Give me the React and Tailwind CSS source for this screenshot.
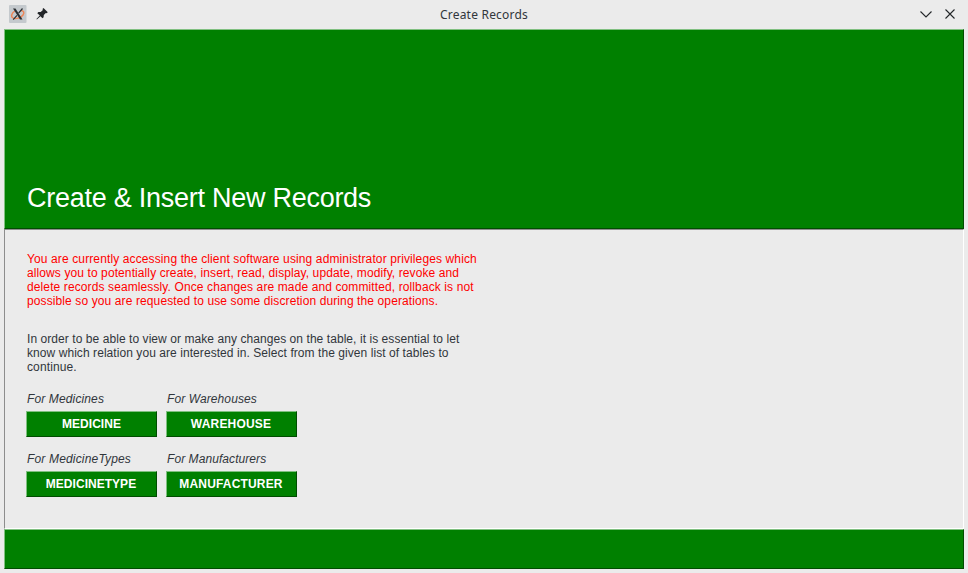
import React from "react";

const bevel = "border border-t-[#80c080] border-l-[#80c080] border-r-[#004d00] border-b-[#004d00] bg-[#008000]";

function TitleBar() {
  return (
    <header className="flex h-[29px] items-start px-[9px] pt-[5px] text-[#31363b]">
      <div className="flex w-20 items-start gap-[9px]">
        <svg width="18" height="18" viewBox="0 0 18 18">
          <rect width="17.500" height="18" rx="1" fill="#c4c9cd" />
          <path d="M6 6C2.500 8 1.500 11.500 4 13C6.500 14.500 12 13 14 10C15.800 7.500 14.500 5.500 12 5.500" fill="none" stroke="#ee8455" strokeWidth="1.400" />
          <path d="M4 3.500H6.500L13.500 14.500H11Z" fill="#2b2f33" />
          <path d="M13.500 3.500L9.600 8.200M8 10.400L4.200 14.700" stroke="#2b2f33" strokeWidth="1.200" />
        </svg>
        <svg className="mt-[3px]" width="12" height="12" viewBox="0 0 12 12" fill="#232629">
          <path d="M7.500 0L11.800 4.300L10.600 5.300L9.800 5L7.800 7L7.600 9.200L6.500 10.200L4.400 8.200L0.900 11.600L0.400 11.100L3.800 7.600L1.300 5.200L2.400 4.100L4.700 4L6.900 2L6.500 1.100Z" />
        </svg>
      </div>
      <h1 className="mt-px flex-1 text-center font-['Noto_Sans',sans-serif] text-[12px] leading-[18px] font-[450] tracking-[0.21px]">Create Records</h1>
      <div className="mt-[3px] flex h-3 w-20 items-center justify-end gap-[13px] pr-1">
        <svg width="12" height="12" viewBox="0 0 12 12" fill="none" stroke="#232629" strokeWidth="1.100">
          <path d="M0.500 3.500L6 9L11.500 3.500" />
        </svg>
        <svg width="10" height="10" viewBox="0 0 10 10" fill="none" stroke="#232629" strokeWidth="1.100">
          <path d="M0.500 0.500L9.500 9.500M9.500 0.500L0.500 9.500" />
        </svg>
      </div>
    </header>
  );
}

function TableChoice({ label, name, labelClass, nameClass }) {
  return (
    <div className="w-[131px]">
      <div className={`pl-px text-[12px] leading-[14px] italic whitespace-nowrap ${labelClass}`}>{label}</div>
      <button className={`mt-[5px] flex h-[26px] w-full items-center justify-center text-[12px] font-bold text-white ${nameClass} ${bevel}`}>{name}</button>
    </div>
  );
}

export default function App() {
  return (
    <div className="h-[573px] w-[968px] overflow-hidden bg-[#ebebeb] font-['Liberation_Sans',Arial,sans-serif] text-[#31363b]">
      <TitleBar />
      <main className="ml-1 w-[960px]">
        <section className={`flex h-[200px] items-end pb-[14px] pl-[22px] ${bevel}`}>
          <h2 className="text-[27px] leading-[31px] tracking-[-0.26px] whitespace-nowrap text-white">Create &amp; Insert New Records</h2>
        </section>
        <section className="h-[300px] border border-t-[#8d8d8d] border-r-white border-b-white border-l-[#8d8d8d] pt-[22px] pl-[21px]">
          <div className="pl-px text-[12px] leading-[14px] whitespace-nowrap">
            <p className="text-[#ff0000]">
              <span className="tracking-[0.12px]">You are currently accessing the client software using administrator privileges which</span><br />
              <span className="tracking-[0.1px]">allows you to potentially create, insert, read, display, update, modify, revoke and</span><br />
              <span className="tracking-[0.11px]">delete records seamlessly. Once changes are made and committed, rollback is not</span><br />
              <span className="tracking-[0.11px]">possible so you are requested to use some discretion during the operations.</span>
            </p>
            <p className="mt-6 tracking-[0.065px]">
              In order to be able to view or make any changes on the table, it is essential to let<br />
              know which relation you are interested in. Select from the given list of tables to<br />
              <span className="tracking-[0.12px]">continue.</span>
            </p>
          </div>
          <div className="mt-[18px] grid grid-cols-[131px_131px] gap-x-[9px] gap-y-[15px]">
            <TableChoice label="For Medicines" name="MEDICINE" labelClass="tracking-[0.13px]" nameClass="tracking-[0.05px]" />
            <TableChoice label="For Warehouses" name="WAREHOUSE" labelClass="tracking-[0.1px]" nameClass="tracking-[0.18px] pr-px" />
            <TableChoice label="For MedicineTypes" name="MEDICINETYPE" labelClass="tracking-[0.17px]" nameClass="tracking-[0.03px] pr-px" />
            <TableChoice label="For Manufacturers" name="MANUFACTURER" labelClass="tracking-[0.07px]" nameClass="tracking-[0.17px] pr-px" />
          </div>
        </section>
        <footer className={`h-10 ${bevel}`} />
      </main>
    </div>
  );
}
